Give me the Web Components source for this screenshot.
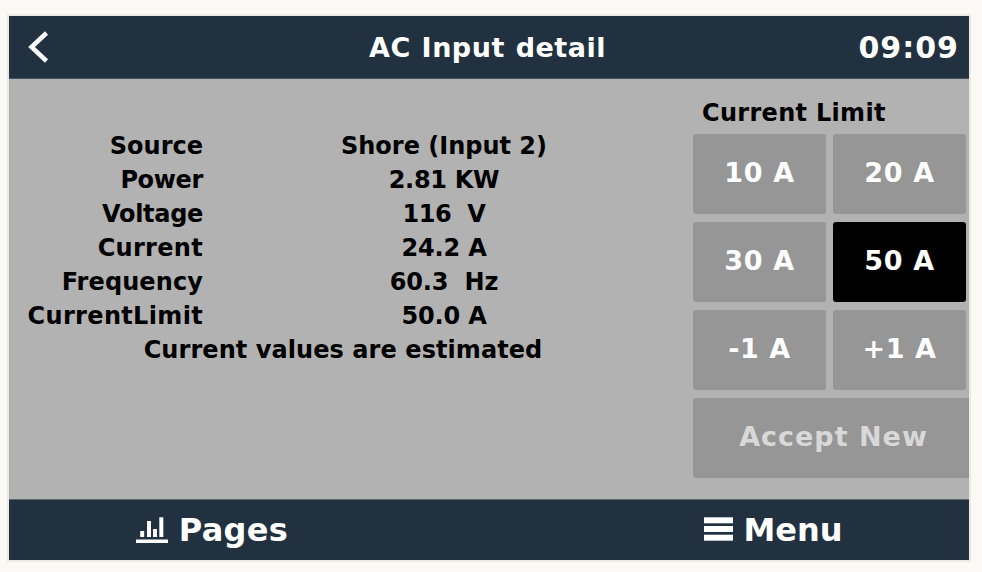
<!DOCTYPE html>
<html><head><meta charset="utf-8"><style>
html,body{margin:0;padding:0;background:#faf9f5;height:572px;overflow:hidden}
body{font-family:"DejaVu Sans",sans-serif;font-weight:bold}
</style></head><body>
<template id="t-screen"><style>
:host{display:flex;flex-direction:column;box-sizing:border-box;width:964px;height:548px;margin:14px 0 0 7px;border:2px solid #ece9e3;background:#b2b2b2;overflow:hidden}
main{display:flex;flex:1;min-height:0}
</style><slot name="header"></slot><main><slot></slot></main><slot name="footer"></slot></template>
<template id="t-header"><style>
:host{display:grid;grid-template-columns:1fr auto 1fr;align-items:center;height:63px;box-sizing:border-box;background:#213140;color:#fff;border-bottom:1px solid #46535f;padding:0 10px 0 7px;flex:none}
.t{font-size:27px;letter-spacing:.5px;white-space:nowrap;word-spacing:1px}
.c{font-size:30px;letter-spacing:1px;justify-self:end}
svg{display:block;margin-left:11px}
</style><svg width="24" height="34" viewBox="0 0 24 34"><path d="M19.5 3 4.500 17 19.500 31" fill="none" stroke="#fff" stroke-width="4.500"/></svg><span class="t"><slot name="title"></slot></span><span class="c"><slot name="clock"></slot></span></template>
<template id="t-table"><style>
:host{display:grid;grid-template-columns:194px 482px;grid-auto-rows:34px;align-items:center;width:684px;box-sizing:border-box;padding-top:50px;font-size:24px;color:#000;align-content:start;flex:none}
</style><slot></slot></template>
<template id="t-row"><style>
:host{display:contents}
.l{text-align:right;white-space:pre}.v{text-align:center;white-space:pre}
</style><span class="l"><slot name="label"></slot></span><span class="v"><slot name="value"></slot></span></template>
<template id="t-note"><style>
:host{display:block;grid-column:1/3;text-align:center;padding-right:8px;box-sizing:border-box;letter-spacing:.07px}
</style><slot></slot></template>
<template id="t-limits"><style>
:host{display:grid;grid-template-columns:133px 133px;grid-template-rows:30px repeat(4,80px);column-gap:7px;row-gap:8px;width:276px;flex:none;align-content:start;padding-top:17px;box-sizing:border-box}
h2{grid-column:1/3;margin:0;font-size:24px;color:#000;line-height:34px;height:30px;padding-left:9px;font-weight:bold;white-space:nowrap;letter-spacing:.3px}
</style><h2><slot name="title"></slot></h2><slot></slot></template>
<template id="t-btn"><style>
:host{display:flex;align-items:center;justify-content:center;background:#969696;color:#fff;border-radius:3px;font-size:27px;padding-bottom:4px;box-sizing:border-box;letter-spacing:.6px;white-space:nowrap}
:host([active]){background:#000}
:host([wide]){grid-column:1/3;width:276px;color:#d8d8d8;padding-left:5px;border-radius:3px 0 0 3px;letter-spacing:1px}
</style><slot></slot></template>
<template id="t-footer"><style>
:host{display:grid;grid-template-columns:1fr 1fr;height:61px;background:#213140;color:#fff;flex:none;border-top:1px solid #5b6771;box-sizing:border-box}
</style><slot></slot></template>
<template id="t-fbtn"><style>
:host{display:flex;align-items:center;justify-content:center;gap:11px;font-size:32px;letter-spacing:.3px;box-sizing:border-box}
:host([side=left]){padding-right:74px}
:host([side=right]){padding-left:89px;gap:10px;letter-spacing:0}
</style><slot name="icon"></slot><span><slot></slot></span></template>
<ve-screen>
<ve-header slot="header"><span slot="title">AC Input detail</span><span slot="clock">09:09</span></ve-header>
<ve-table>
<ve-row><span slot="label">Source</span><span slot="value">Shore (Input 2)</span></ve-row>
<ve-row><span slot="label" style="letter-spacing:-.35px">Power</span><span slot="value" style="letter-spacing:-.3px">2.81 KW</span></ve-row>
<ve-row><span slot="label" style="letter-spacing:-.3px">Voltage</span><span slot="value" style="letter-spacing:-.4px">116  V</span></ve-row>
<ve-row><span slot="label" style="letter-spacing:.3px">Current</span><span slot="value" style="letter-spacing:-.15px">24.2 A</span></ve-row>
<ve-row><span slot="label" style="letter-spacing:.1px">Frequency</span><span slot="value" style="letter-spacing:-.2px">60.3  Hz</span></ve-row>
<ve-row><span slot="label" style="letter-spacing:.33px">CurrentLimit</span><span slot="value" style="letter-spacing:-.15px">50.0 A</span></ve-row>
<ve-note>Current values are estimated</ve-note>
</ve-table>
<ve-limits><span slot="title">Current Limit</span>
<ve-btn>10 A</ve-btn><ve-btn>20 A</ve-btn><ve-btn>30 A</ve-btn><ve-btn active>50 A</ve-btn><ve-btn>-1 A</ve-btn><ve-btn>+1 A</ve-btn><ve-btn wide>Accept New</ve-btn>
</ve-limits>
<ve-footer slot="footer">
<ve-fbtn side="left"><svg slot="icon" width="32" height="26" viewBox="0 0 32 26" style="display:block"><g fill="#fff"><rect x="0" y="22.500" width="32" height="3.500"/><rect x="4.200" y="14" width="4" height="6"/><rect x="11" y="4" width="4" height="16"/><rect x="17" y="12" width="4" height="8"/><rect x="23.300" y="0.300" width="4" height="19.700"/></g></svg>Pages</ve-fbtn>
<ve-fbtn side="right"><svg slot="icon" width="29" height="24" viewBox="0 0 29 24" style="display:block;margin-top:-2px"><g fill="#fff"><rect y="0.300" width="29" height="6"/><rect y="9" width="29" height="6"/><rect y="17.700" width="29" height="6"/></g></svg>Menu</ve-fbtn>
</ve-footer>
</ve-screen>
<script>
function def(n){customElements.define('ve-'+n,class extends HTMLElement{constructor(){super();this.attachShadow({mode:'open'}).append(document.getElementById('t-'+n).content.cloneNode(true))}})}
['screen','header','table','row','note','limits','btn','footer','fbtn'].forEach(def);
</script>
</body></html>
